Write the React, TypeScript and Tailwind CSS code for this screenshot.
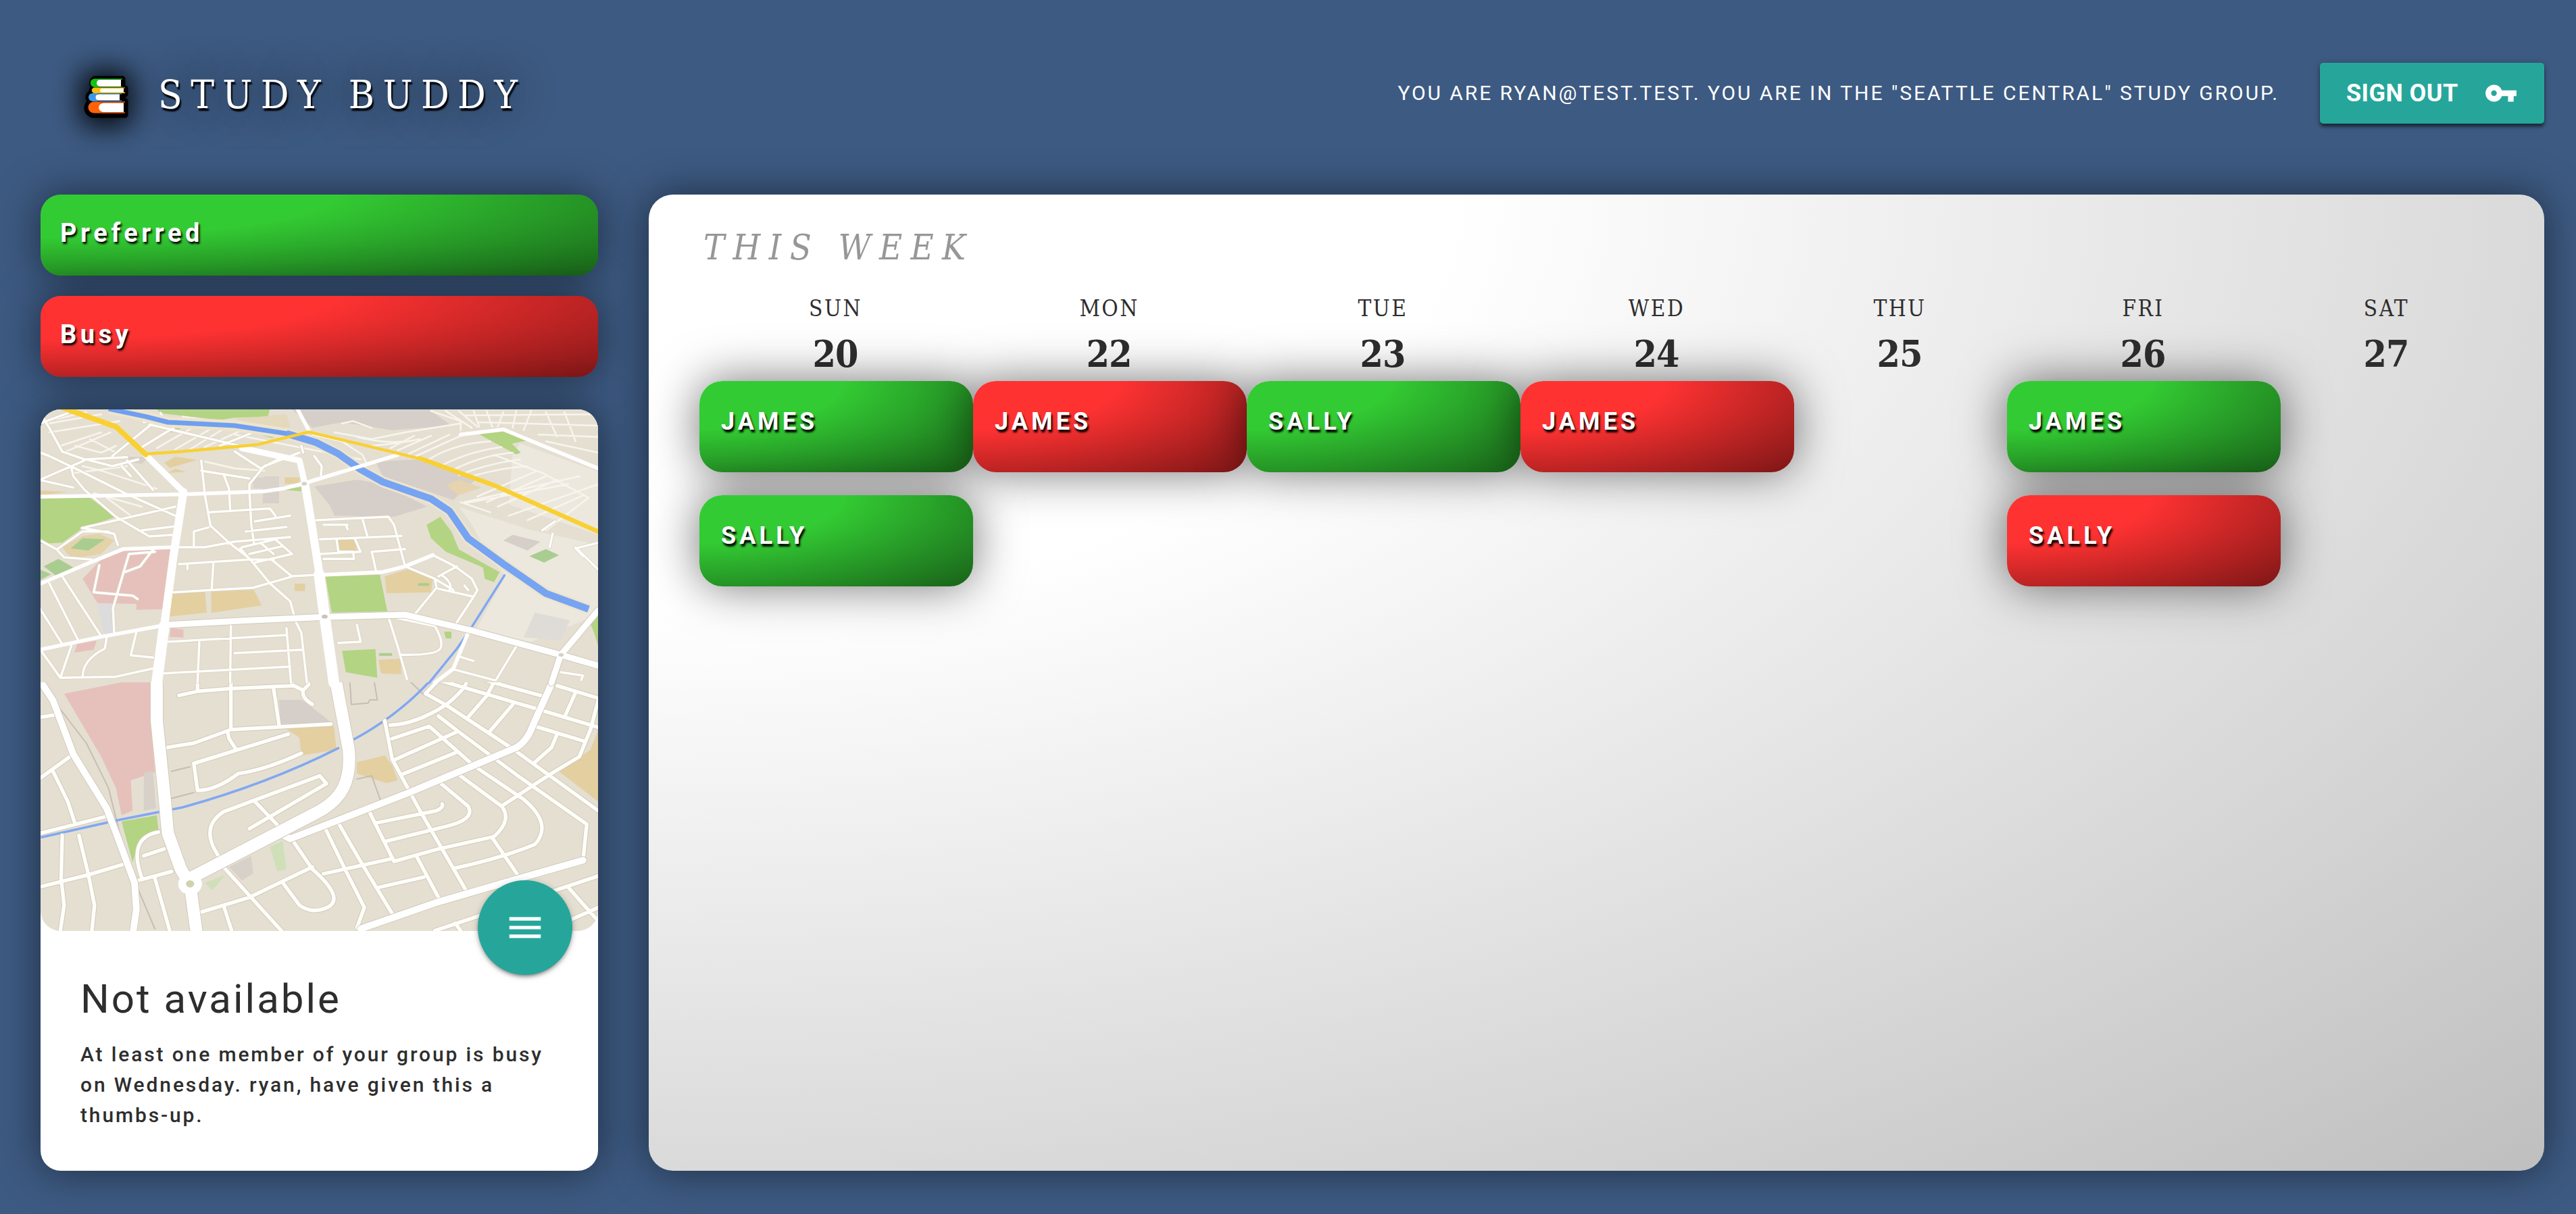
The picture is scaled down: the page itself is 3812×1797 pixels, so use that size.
import React from "react";

type Status = "preferred" | "busy";
type Slot = { name: string; status: Status };
type Day = { label: string; date: number; slots: Slot[] };

const days: Day[] = [
  { label: "SUN", date: 20, slots: [{ name: "JAMES", status: "preferred" }, { name: "SALLY", status: "preferred" }] },
  { label: "MON", date: 22, slots: [{ name: "JAMES", status: "busy" }] },
  { label: "TUE", date: 23, slots: [{ name: "SALLY", status: "preferred" }] },
  { label: "WED", date: 24, slots: [{ name: "JAMES", status: "busy" }] },
  { label: "THU", date: 25, slots: [] },
  { label: "FRI", date: 26, slots: [{ name: "JAMES", status: "preferred" }, { name: "SALLY", status: "busy" }] },
  { label: "SAT", date: 27, slots: [] },
];

const fills: Record<Status, string> = {
  preferred: "bg-[radial-gradient(ellipse_at_top_left,#33cb33_37%,#196119_100%)]",
  busy: "bg-[radial-gradient(ellipse_at_top_left,#ff3232_37%,#7d1616_100%)]",
};

const slab = "font-['Roboto_Slab','DejaVu_Serif_Condensed','DejaVu_Serif',serif]";

function Books() {
  const shapes = (
    <>
      <path d="M59 5H18a8 8 0 0 0 0 13h41z" />
      <path d="M63 19H18a4 4 0 0 0 0 8h45z" />
      <path d="M59 26H15a6 6 0 0 0 0 12h44z" />
      <path d="M63 38H17a9 9 0 0 0 0 20h46z" />
    </>
  );
  return (
    <svg viewBox="0 0 70 70" className="mt-[7px] h-[70px] w-[70px] overflow-visible">
      <defs>
        <filter id="glow" x="-150%" y="-150%" width="400%" height="400%">
          <feGaussianBlur stdDeviation="20" />
        </filter>
      </defs>
      <rect x="-2" y="-7" width="74" height="82" rx="12" filter="url(#glow)" opacity="0.92" />
      <g stroke="#000" strokeWidth="9" strokeLinejoin="round">{shapes}</g>
      <path d="M18 4.500h41v1.500h-2v10h2v1H18a6.200 6.200 0 0 1 0-12.500z" fill="#12c312" />
      <path d="M24 4.500h35v1.500h-2v10h2v1H24z" fill="#128a17" />
      <path d="M57 6H26a5 5 0 0 0 0 10h31z" fill="#fff" />
      <path d="M18 17.500h45v1h-2v6h2v1.500H18a4.200 4.200 0 0 1 0-8.500z" fill="#ffbd0a" />
      <path d="M61 19H28a2.800 2.800 0 0 0 0 5.500h33z" fill="#fff" />
      <path d="M15 26h43v1.500h-3V36h3v2H15a6 6 0 0 1 0-12z" fill="#3d97e8" />
      <path d="M22 26h36v1.500h-3V36h3v2H22z" fill="#0f63a8" />
      <path d="M55 27.500H24a4.500 4.500 0 0 0 0 9h31z" fill="#fff" />
      <path d="M17 38.500h46v1.500h-2v14h2v1.500H17a8.500 8.500 0 0 1 0-17z" fill="#ff6208" />
      <path d="M27 38.500h36v1.500h-2v14h2v1.500H27z" fill="#c9480c" />
      <path d="M61 40.500H31a6.700 6.700 0 0 0 0 13.500h30z" fill="#fff" />
    </svg>
  );
}

/* Areas of the upper and lower halves of the map tile */
const upperAreas: [string, string][] = [
  ["M0 0H1568V1260H0z", "#e5dfd2"],
  ["M1330 200L1568 340V1000L1540 960 1480 1000 1360 1080 1210 1030 1290 790 1240 680 1200 560 1165 480 1350 580 1568 660V620L1300 470 1310 250z", "#ece8de"],
  ["M715 48H1085L1145 120 985 140 850 105 770 130z", "#d6cec8"],
  ["M940 280L1050 270 1210 360 1150 450 960 345z", "#d6cec8"],
  ["M775 390L890 360 960 380 1080 480 990 525 830 520 815 470z", "#d6cec8"],
  ["M1310 605L1385 635 1350 675 1285 630z", "#d6cec8"],
  ["M640 345H680V465H635zM275 258H330L310 290 270 280z", "#d8d1ca"],
  ["M610 350H680V400H610z", "#dad3cb"],
  ["M1340 1060L1370 950 1465 985 1440 1075z", "#dfdcd7"],
  ["M190 910H230L235 1060 205 1040z", "#dcdcdd"],
  ["M350 48H655L650 80 560 85 520 95 360 65z", "#b3d483"],
  ["M325 105L420 130 390 150z", "#b3d483"],
  ["M580 138L690 155 660 175z", "#b3d483"],
  ["M1210 150L1285 137 1352 185 1308 200 1332 240 1320 248z", "#b3d483"],
  ["M36 438L165 436 240 525 150 575 95 640 36 645z", "#b3d483"],
  ["M805 790L952 782 972 945 822 950z", "#b3d483"],
  ["M850 1120L940 1112 945 1240 860 1215z", "#b3d483"],
  ["M1115 525L1145 590 1165 670 1230 730 1275 770 1260 815 1235 800 1230 750 1130 680 1090 620 1078 560z", "#b3d483"],
  ["M1520 1000L1541 960V1100L1530 1040z", "#b3d483"],
  ["M85 712L125 750 80 788 45 745zM36 760L65 780 36 805z", "#a9cd90"],
  ["M1400 668L1435 695 1395 728 1355 700z", "#a9cd90"],
  ["M690 405L740 392V412z", "#b3d483"],
  ["M1125 1035H1145V1065H1130z", "#b3d483"],
  ["M150 610L195 600 235 630 200 690 120 710 95 660z", "#e4d2a8"],
  ["M150 620L210 625 165 675 118 665z", "#a9cd90"],
  ["M370 285L400 258 460 272 385 308zM380 330L400 312 430 325z", "#e3cfa0"],
  ["M36 408L110 415 36 428z", "#e3cfa0"],
  ["M1130 385L1165 360 1225 395 1165 430z", "#e6d3b0"],
  ["M390 868L480 855 485 950 385 968zM497 856L612 850 633 918 497 952z", "#e3cfa0"],
  ["M722 822H750V855H722zM838 625H885L890 678 838 670zM695 350H735V378H695z", "#e3cfa0"],
  ["M965 790L1030 755 1095 800 1090 860 970 865z", "#e3cfa0"],
  ["M948 1160L1008 1155 1010 1225 955 1220z", "#e3cfa0"],
  ["M1055 820H1085V832H1055zM950 1130H985V1142H950z", "#a9cd90"],
  ["M205 705L265 675 388 665 365 935 295 938V912L190 908 150 800z", "#e6c1bc"],
  ["M388 1020L422 1025V1062L385 1058zM135 1090L188 1075 180 1115 128 1128z", "#e6c1bc"],
  ["M560 90L700 70 710 130 640 130z", "#e4d8bd"],
];

const lowerAreas: [string, string][] = [
  ["M0 0H1568V1140H0z", "#e5dfd2"],
  ["M100 80L210 45 338 0 335 230 345 430 280 465 285 600 255 620 240 500 200 360z", "#e6c1bc"],
  ["M315 430L340 425 348 590 315 600z", "#d8d1ca"],
  ["M680 108H740L800 180 820 210 685 215z", "#d6cec8"],
  ["M695 232L828 225 835 330 740 355 735 275z", "#e3cfa0"],
  ["M890 385L965 355 985 400 1000 465 970 478 890 435z", "#e3cfa0"],
  ["M1541 240L1520 330 1435 425 1541 560z", "#e3cfa0"],
  ["M255 648L350 620 355 690 300 740 285 830z", "#b3d483"],
  ["M920 0H958V10H925z", "#b3d483"],
  ["M605 800L610 880 580 910 545 850z", "#d8d1ca"],
  ["M655 760L690 735 700 860 675 870zM480 920L535 885 500 955z", "#cfe0b9"],
];

const upperMinor =
  "M45 90L60 130 95 235 155 270 270 260 M36 110L110 65 M36 240L60 255 130 310 270 425 400 520 M36 360L155 275 M36 362L125 395 M120 310L125 345 155 405 M155 405L240 525 330 612 395 605 M148 575L400 480 M310 585L395 568 M160 270L230 300 300 270 M255 300L280 345 M270 275L340 405 M350 95L230 255 M395 130L310 215 M640 130L520 210 M360 65L370 90 315 105 M330 115L640 235 730 270 M470 275L480 430 495 565 545 640 600 710 655 820 710 900 725 990 740 1040 755 1260 M530 335L545 400 548 490 M600 415V380L640 300 735 240 M600 415L605 560 612 640 M560 235L630 310 690 260 M470 320L600 355 M490 505L655 488 670 520 M615 545L710 520 M590 590L700 570 M450 655L450 590 490 572 M400 660H480L560 635 710 615 M575 665L610 730 715 690 670 625 580 660 M600 690L690 655 M630 640L665 690 M410 735L600 715 665 715 M433 735V758 M503 725L498 850 M660 715L715 790 M395 860L500 850 610 840 720 788 790 782 M775 255L795 300 793 340 M740 210L745 240 M780 540L975 525 990 560 1020 745 M905 535L918 610 M790 625L1010 610 M885 625L900 680 790 690 M835 625L840 680 880 680 882 712 800 712 M930 680L1020 668 M930 680L942 770 M865 580L860 560 M800 560L865 560 M1020 745L1100 800 1150 850 M1095 695L1155 745 1200 800 1215 850 1205 880 1155 1005 M1110 845L1205 880 M1110 790L1160 745 M1120 785Q1150 820 1140 850 M1100 800L1105 840 1045 960 M1180 830L1190 850 M975 970L1000 1100 1025 1245 M985 970L1100 1010Q1125 1080 1115 1110T1010 1138 M890 1005L900 1080 840 1085 M1320 1100L1265 1250 M1145 1200L1260 1250 M1165 1145L1205 1165 M1480 660L1541 760 M1541 640L1480 665 1500 700 M1440 1215L1500 1230 1495 1250 M1410 660L1418 600 M1390 585L1425 545 M36 935L95 1090 M60 820L140 1080 M95 790L200 1055 M36 1115L90 1240 M120 1095L90 1240 240 1235 350 1195 M215 1060L210 1110Q150 1160 150 1235 M295 1035L280 1140 340 1150 M235 1040L232 930 275 690 M195 740L180 860 285 875 298 890 M340 670L305 745 265 770 M275 690L345 680 M550 1000L548 1260 M465 1075L460 1260 M380 1080L700 1050 M560 1130L745 1115 M370 1220L710 1190 M700 1020L712 1260 M150 575L185 585 235 600 245 650 M80 670L150 590 220 590 M80 670L100 705 175 715 M36 630L80 670";

const upperThin =
  "M170 180L240 240 M60 150L250 100 M90 210L200 150 M105 235L225 150 M440 135L350 220 M500 130L400 225 M545 120L440 225 M600 125L480 215 M480 280L560 310 640 320 M770 160L850 190 905 250 915 285 M830 150L930 180 1020 150 1170 110 M850 110L880 100 930 130 M1090 55L1170 100 1170 140 M1130 55L1200 130 M1165 55L1215 125 M1205 55L1220 125 M1240 55L1255 125 M1285 60L1270 125 M1320 55L1310 130 M1360 55L1340 140 M1400 60L1430 170 M1450 60L1480 190 M1180 75L1541 70 M1215 105L1541 120 M1380 160L1541 170 M1400 190L1541 240 M1045 165L980 220 M1090 165L1000 230 M1140 160L1030 245 M1190 150L1050 255 M1250 190Q1150 200 1080 275 M1280 215Q1190 235 1115 300 M1310 240Q1230 250 1145 320 M1330 270Q1240 290 1165 340 M1350 300Q1270 310 1190 350 M1370 325L1215 435 M1400 345L1240 460 M1430 360L1270 480 M1460 380L1180 465 M1490 345L1180 460 M1500 430L1350 540 M1515 440L1400 585 M1541 380L1300 520 M1260 250L1390 330 1515 440 M1170 460L1250 505 M560 160L900 270 M420 80L640 130 M60 110L200 70 M80 90L160 60 M130 210L200 240 240 210 M350 400L200 320 150 300 M130 330L270 300 M180 420L310 480 M215 440L280 520 M890 170Q960 200 1020 190 M930 210Q1000 200 1060 180";

const lowerMinor =
  "M36 185L75 175 M36 455L120 355 M70 425L110 560 130 660 M36 700L215 625 M95 710L92 900 100 1020 90 1133 M140 710L165 880 182 1020 175 1133 M36 938L165 885 260 838 M460 0V70L410 88 M460 70L550 58 720 45 745 65 760 40 755 0 M745 65Q740 100 770 128 M550 0V235 M665 55L680 220 M375 320L450 300 550 240 820 215 M542 255L545 280 565 330 M710 0L715 45 M705 260L450 390 460 510 Q510 510 570 435 Q640 420 740 345 M525 820Q460 680 530 605 L790 445 808 480 600 680 M615 560L720 740 770 860 Q860 990 810 1030 Q770 1060 735 1020 L690 920 M530 850L690 1140 M470 1050L600 985 770 850 M530 1020L552 1133 M345 900L385 1133 M300 910L390 870 M315 800L370 770 M310 900Q270 720 355 695 M965 200L985 370 1060 600 1190 970 M980 220Q1050 215 1130 130 Q1170 80 1185 35 M1110 20L1075 80 1130 130 1310 325 1541 600 M985 280L1085 225 1205 400 1340 550 Q1420 660 1370 750 Q1280 810 1155 855 M1110 180L1165 250 1320 440 1510 660 1500 820 M990 375L1160 250 M1010 440L1160 340 M1165 440L1280 580 Q1310 640 1260 715 L1110 770 990 825 925 610 M1110 470L1190 580 Q1210 640 1130 670 L970 735 M940 655L1105 600Q1125 585 1120 570 M1110 20L1380 150 1541 230 M1190 0L1400 95 M1270 0L1240 90 1190 185 M1310 130L1250 245 M1430 45L1541 100 M1480 75L1450 185 M1541 110L1520 240 1490 360 1410 440 1280 580 M1370 225L1500 290 M1430 260L1415 320 1370 385 M1310 325L1541 600 M805 680L855 850 910 1030 890 1120 M840 655L905 840 990 1070 M800 880L980 815 M1050 800L1115 1000 M950 940L1070 895 M1255 720L1330 900 M1541 890L1100 1133 M1460 940L1541 1090 M1541 1030L1400 1133 M1155 1100L1170 1133";

function StreetMap() {
  return (
    <svg viewBox="0 0 825 772" className="block h-[772px] w-[825px] rounded-[30px]" fill="none" strokeLinecap="round" strokeLinejoin="round">
      <g transform="translate(-20 394) scale(.5485 .33333)">
        {lowerAreas.map(([d, c]) => <path key={d} d={d} fill={c} />)}
        <path vectorEffect="non-scaling-stroke" d="M90 150L160 300 220 500 250 700 300 950 345 1125 M390 425L440 405 M390 545L450 520 M870 0L875 128 920 122 925 108 945 108 935 10 M890 460L930 445 955 560 M1030 20L1070 85" stroke="#c6beb2" strokeWidth="2" />
        <path vectorEffect="non-scaling-stroke" d="M40 718L245 642 420 585Q650 480 840 322M880 285Q1010 170 1100 0" stroke="#80a8f2" strokeWidth="3.500" />
        <path vectorEffect="non-scaling-stroke" d={lowerMinor} stroke="#d2cabb" strokeWidth="7.500" />
        <path vectorEffect="non-scaling-stroke" d={lowerMinor} stroke="#fffefa" strokeWidth="5.500" />
        <path vectorEffect="non-scaling-stroke" d="M36 25L70 110 125 350 215 590 245 720 290 920 295 1040 285 1150 M1425 0L1365 220Q1350 290 1320 320L1030 520 710 725 680 700 M1500 820L1340 895 1100 1010 900 1125" stroke="#d2cabb" strokeWidth="12" />
        <path vectorEffect="non-scaling-stroke" d="M36 25L70 110 125 350 215 590 245 720 290 920 295 1040 285 1150 M1425 0L1365 220Q1350 290 1320 320L1030 520 710 725 680 700 M1500 820L1340 895 1100 1010 900 1125" stroke="#fff" strokeWidth="10" />
        <path vectorEffect="non-scaling-stroke" d="M350 -20L350 200 370 520 380 700 415 860 440 930 458 1150 M828 -20L868 330C875 470 850 550 780 610L440 900" stroke="#d2cabb" strokeWidth="20" />
        <path vectorEffect="non-scaling-stroke" d="M350 -20L350 200 370 520 380 700 415 860 440 930 458 1150 M828 -20L868 330C875 470 850 550 780 610L440 900" stroke="#fff" strokeWidth="18" />
        <ellipse cx="440" cy="925" rx="32" ry="48" fill="#fff" />
        <ellipse cx="440" cy="925" rx="11" ry="16" fill="#cfd3ae" />
      </g>
      <g transform="translate(-20 -16) scale(.5485 .33333)">
        {upperAreas.map(([d, c]) => <path key={d} d={d} fill={c} />)}
        <path vectorEffect="non-scaling-stroke" d={upperThin} stroke="#f8f5ee" strokeWidth="2.500" />
        <path vectorEffect="non-scaling-stroke" d="M1288 785L1190 1040 1160 1110 1085 1262" stroke="#80a8f2" strokeWidth="3.500" />
        <path vectorEffect="non-scaling-stroke" d={upperMinor} stroke="#d8d1c4" strokeWidth="5" />
        <path vectorEffect="non-scaling-stroke" d={upperMinor} stroke="#fffefa" strokeWidth="3.500" />
        <path vectorEffect="non-scaling-stroke" d="M220 45L320 80 380 105 560 120 700 155 780 195 840 245 900 315 960 370 1090 445 1140 500 1190 620 1290 740 1400 865 1515 935" stroke="#ede4cd" strokeWidth="16" strokeLinecap="butt" />
        <path vectorEffect="non-scaling-stroke" d="M220 45L320 80 380 105 560 120 700 155 780 195" stroke="#6f9ff0" strokeWidth="7" strokeLinecap="butt" />
        <path vectorEffect="non-scaling-stroke" d="M700 155L780 195 840 245 900 315 960 370 1090 445 1140 500 1190 620 1290 740 1400 865 1515 935" stroke="#76a4f3" strokeWidth="10.500" strokeLinecap="butt" />
        <path vectorEffect="non-scaling-stroke" d="M36 436L420 425 640 412 690 400 750 375 890 305 1000 250 M36 822L160 735 260 668 400 660 M36 1115L200 1058 375 1005 M805 782L960 770 1020 745 1095 695 M1285 137L1541 310 M1170 160L1285 137 M1150 1200L1100 1262 M1190 1040L1150 1200 M730 48L760 140" stroke="#fff" strokeWidth="5.500" />
        <path vectorEffect="non-scaling-stroke" d="M375 1005L600 985 803 970 1020 960 1200 1030 1440 1138 1560 1195 M1541 940L1480 1060 1440 1138 1415 1262" stroke="#d2cabb" strokeWidth="11" />
        <path vectorEffect="non-scaling-stroke" d="M375 1005L600 985 803 970 1020 960 1200 1030 1440 1138 1560 1195 M1541 940L1480 1060 1440 1138 1415 1262 M320 250L422 415 M580 220L735 275 750 380" stroke="#fff" strokeWidth="9" />
        <path vectorEffect="non-scaling-stroke" d="M422 415L395 700 370 1010 350 1262" stroke="#fff" strokeWidth="12" />
        <path vectorEffect="non-scaling-stroke" d="M370 1010L350 1262 M788 780L803 970 828 1262" stroke="#fff" strokeWidth="16" />
        <path vectorEffect="non-scaling-stroke" d="M750 380L768 560 790 790" stroke="#fff" strokeWidth="12" />
        <path vectorEffect="non-scaling-stroke" d="M95 40L240 125 320 248" stroke="#f9d033" strokeWidth="8" />
        <path vectorEffect="non-scaling-stroke" d="M320 246L420 235 620 205 760 148 900 203 1080 275 1260 385 1560 605" stroke="#f9d033" strokeWidth="4.500" />
        <path vectorEffect="non-scaling-stroke" d="M1060 265L1260 385 1560 605" stroke="#f9d033" strokeWidth="6.500" />
        <ellipse cx="803" cy="968" rx="8" ry="9" fill="#c9c4bb" />
        <ellipse cx="748" cy="378" rx="7" ry="8" fill="#d5d0c7" />
        <ellipse cx="1441" cy="1138" rx="7" ry="8" fill="#d5d0c7" />
      </g>
    </svg>
  );
}

function LegendItem({ label, status }: { label: string; status: Status }) {
  return (
    <div className={`h-[120px] rounded-[30px] pt-7 pl-[29px] text-[38px] leading-[58px] font-bold tracking-[5.600px] text-white shadow-[0_0_60px_rgba(0,0,0,.5)] [text-shadow:2px_3px_3px_#000] ${fills[status]}`}>
      {label}
    </div>
  );
}

function DayColumn({ day }: { day: Day }) {
  return (
    <div className="flex flex-col text-[#2e2e2e]">
      <div className={`${slab} pr-[2px] text-center text-[33px] leading-10 tracking-[2.5px]`}>{day.label}</div>
      <div className={`${slab} mt-[17px] pr-[3px] text-center text-[55px] leading-[60px] font-bold tracking-[-1px]`}>{day.date}</div>
      <div className="mt-[10px] flex flex-col gap-[34px]">
        {day.slots.map((slot) => (
          <div
            key={slot.name}
            className={`h-[135px] rounded-[34px] pt-8 pl-8 text-[36px] leading-[56px] font-bold tracking-[5.100px] text-white shadow-[0_0_70px_rgba(0,0,0,.55)] [text-shadow:2px_4px_3px_#000] ${fills[slot.status]}`}
          >
            {slot.name}
          </div>
        ))}
      </div>
    </div>
  );
}

export default function App() {
  return (
    <div className="flex h-[1797px] w-[3812px] flex-col overflow-hidden bg-[#3d5a82] font-[Roboto,sans-serif]">
      <header className="flex h-[288px] items-start justify-between pr-[47px] pl-[122px]">
        <div className="flex items-start pt-[105px]">
          <Books />
          <h1 className={`${slab} ml-[42px] text-[58px] leading-[70px] font-light tracking-[12.400px] whitespace-nowrap text-white [text-shadow:2px_4px_2px_#000,0_0_60px_rgba(0,0,0,.9)]`}>
            STUDY BUDDY
          </h1>
        </div>
        <div className="flex items-center pt-[93px]">
          <span className="pb-[2px] text-[30px] tracking-[2.930px] whitespace-nowrap text-white">
            YOU ARE RYAN@TEST.TEST. YOU ARE IN THE "SEATTLE CENTRAL" STUDY GROUP.
          </span>
          <button className="ml-[60px] flex h-[90px] w-[332px] items-center justify-between rounded-[5px] bg-[#26a69a] px-[39px] text-[36px] font-bold tracking-[.4px] whitespace-nowrap text-white shadow-[0_4px_4px_rgba(0,0,0,.24),0_6px_4px_-2px_rgba(0,0,0,.3),0_2px_10px_rgba(0,0,0,.3)]">
            SIGN OUT
            <svg viewBox="0 0 24 24" fill="currentColor" className="h-[50px] w-[50px]">
              <path d="M12.650 10C11.830 7.670 9.610 6 7 6c-3.310 0-6 2.690-6 6s2.690 6 6 6c2.610 0 4.830-1.670 5.650-4H17v4h4v-4h2v-4H12.650zM7 14c-1.100 0-2-.9-2-2s.9-2 2-2 2 .9 2 2-.9 2-2 2z" />
            </svg>
          </button>
        </div>
      </header>

      <main className="flex h-[1445px] gap-[75px] pr-[47px] pl-[60px]">
        <aside className="flex w-[825px] shrink-0 flex-col">
          <div className="flex flex-col gap-[30px]">
            <LegendItem label="Preferred" status="preferred" />
            <LegendItem label="Busy" status="busy" />
          </div>
          <section className="mt-12 h-[1127px] rounded-[30px] bg-white shadow-[0_0_60px_rgba(0,0,0,.5)]">
            <div className="relative">
              <StreetMap />
              <button className="absolute right-[38px] bottom-[-65px] flex h-[140px] w-[140px] items-center justify-center rounded-full bg-[#26a69a] text-white shadow-[0_4px_4px_rgba(0,0,0,.16),0_6px_2px_-4px_rgba(0,0,0,.14),0_2px_10px_rgba(0,0,0,.25)]">
                <svg viewBox="0 0 24 24" fill="currentColor" className="h-[62px] w-[62px]">
                  <path d="M3 18h18v-2H3v2zm0-5h18v-2H3v2zm0-7v2h18V6H3z" />
                </svg>
              </button>
            </div>
            <div className="px-[59px] pt-[69px] text-[#2e2e2e]">
              <h2 className="text-[60px] leading-[64px] tracking-[3px]">Not available</h2>
              <p className="mt-[27px] text-[30px] leading-[45px] font-medium tracking-[2.870px]">
                At least one member of your group is busy on Wednesday. ryan, have given this a thumbs-up.
              </p>
            </div>
          </section>
        </aside>

        <section className="flex-1 rounded-[36px] bg-[radial-gradient(ellipse_at_top_left,#fff_30%,#bfbfbf_100%)] px-[75px] pt-12 shadow-[0_0_60px_rgba(0,0,0,.5)]">
          <h2 className={`${slab} pl-[6px] text-[52px] leading-[60px] font-light tracking-[12.400px] text-[#979797] italic`}>THIS WEEK</h2>
          <div className="mt-[41px] grid grid-cols-[405px_405px_405px_405px_315px_405px_315px]">
            {days.map((day) => (
              <DayColumn key={day.label} day={day} />
            ))}
          </div>
        </section>
      </main>
    </div>
  );
}
